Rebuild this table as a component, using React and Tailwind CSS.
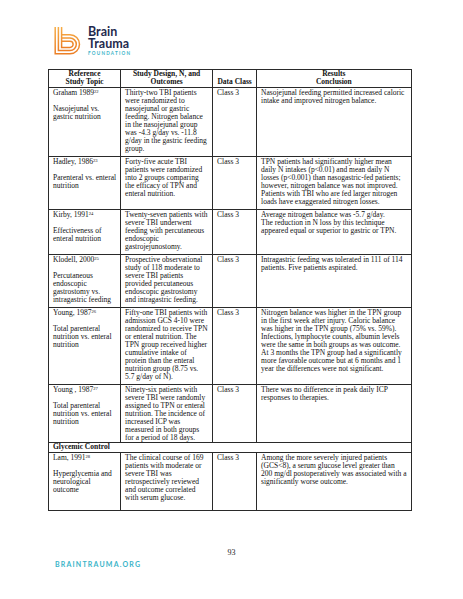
import React from 'react';

const rows = [
  {
    ref: 'Graham 1989', sup: '22',
    topic: ['Nasojejunal vs.', 'gastric nutrition'],
    design: [
      'Thirty-two TBI patients',
      'were randomized to',
      'nasojejunal or gastric',
      'feeding. Nitrogen balance',
      'in the nasojejunal group',
      'was -4.3 g/day vs. -11.8',
      'g/day in the gastric feeding',
      'group.',
    ],
    result: [
      'Nasojejunal feeding permitted increased caloric',
      'intake and improved nitrogen balance.',
    ],
  },
  {
    ref: 'Hadley, 1986', sup: '23',
    topic: ['Parenteral vs. enteral', 'nutrition'],
    design: [
      'Forty-five acute TBI',
      'patients were randomized',
      'into 2 groups comparing',
      'the efficacy of TPN and',
      'enteral nutrition.',
    ],
    result: [
      'TPN patients had significantly higher mean',
      'daily N intakes (p<0.01) and mean daily N',
      'losses (p<0.001) than nasogastric-fed patients;',
      'however, nitrogen balance was not improved.',
      'Patients with TBI who are fed larger nitrogen',
      'loads have exaggerated nitrogen losses.',
    ],
  },
  {
    ref: 'Kirby, 1991', sup: '24',
    topic: ['Effectiveness of', 'enteral nutrition'],
    design: [
      'Twenty-seven patients with',
      'severe TBI underwent',
      'feeding with percutaneous',
      'endoscopic',
      'gastrojejunostomy.',
    ],
    result: [
      'Average nitrogen balance was -5.7 g/day.',
      'The reduction in N loss by this technique',
      'appeared equal or superior to gastric or TPN.',
    ],
  },
  {
    ref: 'Klodell, 2000', sup: '25',
    topic: ['Percutaneous', 'endoscopic', 'gastrostomy vs.', 'intragastric feeding'],
    design: [
      'Prospective observational',
      'study of 118 moderate to',
      'severe TBI patients',
      'provided percutaneous',
      'endoscopic gastrostomy',
      'and intragastric feeding.',
    ],
    result: [
      'Intragastric feeding was tolerated in 111 of 114',
      'patients. Five patients aspirated.',
    ],
  },
  {
    ref: 'Young, 1987', sup: '26',
    topic: ['Total parenteral', 'nutrition vs. enteral', 'nutrition'],
    design: [
      'Fifty-one TBI patients with',
      'admission GCS 4-10 were',
      'randomized to receive TPN',
      'or enteral nutrition. The',
      'TPN group received higher',
      'cumulative intake of',
      'protein than the enteral',
      'nutrition group (8.75 vs.',
      '5.7 g/day of N).',
    ],
    result: [
      'Nitrogen balance was higher in the TPN group',
      'in the first week after injury. Caloric balance',
      'was higher in the TPN group (75% vs. 59%).',
      'Infections, lymphocyte counts, albumin levels',
      'were the same in both groups as was outcome.',
      'At 3 months the TPN group had a significantly',
      'more favorable outcome but at 6 months and 1',
      'year the differences were not significant.',
    ],
  },
  {
    ref: 'Young , 1987', sup: '27', pb: 'pb-[0px]',
    topic: ['Total parenteral', 'nutrition vs. enteral', 'nutrition'],
    design: [
      'Ninety-six patients with',
      'severe TBI were randomly',
      'assigned to TPN or enteral',
      'nutrition. The incidence of',
      'increased ICP was',
      'measured in both groups',
      'for a period of 18 days.',
    ],
    result: [
      'There was no difference in peak daily ICP',
      'responses to therapies.',
    ],
  },
];

const lam = {
  ref: 'Lam, 1991', sup: '28', pb: 'pb-[8px]',
  topic: ['Hyperglycemia and', 'neurological', 'outcome'],
  design: [
    'The clinical course of 169',
    'patients with moderate or',
    'severe TBI was',
    'retrospectively reviewed',
    'and outcome correlated',
    'with serum glucose.',
  ],
  result: [
    'Among the more severely injured patients',
    '(GCS<8), a serum glucose level greater than',
    '200 mg/dl postoperatively was associated with a',
    'significantly worse outcome.',
  ],
};

function Lines({ items }) {
  return items.map((l, i) => (
    <div key={i} className="whitespace-nowrap">{l}</div>
  ));
}

function Row({ r }) {
  const cell = 'border border-[#2a2a2a] align-top px-[4px] pt-[1px] ' + (r.pb || 'pb-[3px]');
  return (
    <tr>
      <td className={cell}>
        <div className="whitespace-nowrap">
          {r.ref}
          <span className="align-top text-[4.6px] leading-[5px]">{r.sup}</span>
        </div>
        <div className="h-[8px]" />
        <Lines items={r.topic} />
      </td>
      <td className={cell}><Lines items={r.design} /></td>
      <td className={cell}>Class 3</td>
      <td className={cell}><Lines items={r.result} /></td>
    </tr>
  );
}

function Logo() {
  const ks = [0, 1, 2];
  return (
    <div className="flex items-start gap-[7px] pl-[54px] pt-[27px]">
      <svg width="27" height="28" viewBox="0 0 27 28" fill="none">
        <defs>
          <linearGradient id="btf" x1="0" y1="0" x2="0" y2="1">
            <stop offset="0" stopColor="#f6ad47" />
            <stop offset="1" stopColor="#ec7f26" />
          </linearGradient>
        </defs>
        {ks.map((k) => {
          const d = k * 3.2;
          const r = 9.5 - d;
          return (
            <path
              key={k}
              d={`M${1.2 + d} 0 V${26.8 - d} H16 A${r} ${r} 0 0 0 16 ${7.8 + d} H${7.6}`}
              stroke="url(#btf)"
              strokeWidth="1.5"
            />
          );
        })}
      </svg>
      <div className="flex flex-col -mt-[1px]" style={{ fontFamily: 'Lato, "Open Sans", sans-serif' }}>
        <span className="text-[12.5px] leading-[12px] font-bold text-[#1f2a4d]">Brain</span>
        <span className="text-[12.5px] leading-[12.5px] font-bold text-[#1f2a4d]">Trauma</span>
        <span className="text-[4.6px] leading-[5px] font-bold tracking-[1.25px] text-[#3ab4c8]">FOUNDATION</span>
      </div>
    </div>
  );
}

export default function App() {
  const head = 'border border-[#2a2a2a] px-[4px] pt-[0.5px] pb-[0.5px] font-bold text-center';
  return (
    <div className="w-[463px] h-[599px] bg-white flex flex-col">
      <Logo />
      <div className="pl-[48px] mt-[13px]">
        <table
          className="table-fixed border-collapse text-[7.5px] leading-[8px] text-[#111]"
          style={{ fontFamily: '"Liberation Serif", "Times New Roman", serif' }}
        >
          <colgroup>
            <col className="w-[71px]" />
            <col className="w-[92px]" />
            <col className="w-[44px]" />
            <col className="w-[153px]" />
          </colgroup>
          <thead>
            <tr>
              <th className={head + ' align-top'}>Reference<br />Study Topic</th>
              <th className={head + ' align-top'}>Study Design, N, and<br />Outcomes</th>
              <th className={head + ' align-bottom'}>Data Class</th>
              <th className={head + ' align-top'}>Results<br />Conclusion</th>
            </tr>
          </thead>
          <tbody>
            {rows.map((r, i) => <Row key={i} r={r} />)}
            <tr>
              <td colSpan={4} className="border border-[#2a2a2a] px-[4px] pt-[0.5px] pb-[0.5px] font-bold">
                Glycemic Control
              </td>
            </tr>
            <Row r={lam} />
          </tbody>
        </table>
      </div>
      <div className="mt-auto pb-[31px] flex flex-col">
        <div
          className="text-center text-[8px] leading-[8px] text-[#222]"
          style={{ fontFamily: '"Liberation Serif", "Times New Roman", serif' }}
        >
          93
        </div>
        <div
          className="pl-[55px] mt-[3px] text-[7px] leading-[8px] font-bold tracking-[1.2px] text-[#3ab4c8]"
          style={{ fontFamily: 'Lato, "Open Sans", sans-serif' }}
        >
          BRAINTRAUMA.ORG
        </div>
      </div>
    </div>
  );
}
